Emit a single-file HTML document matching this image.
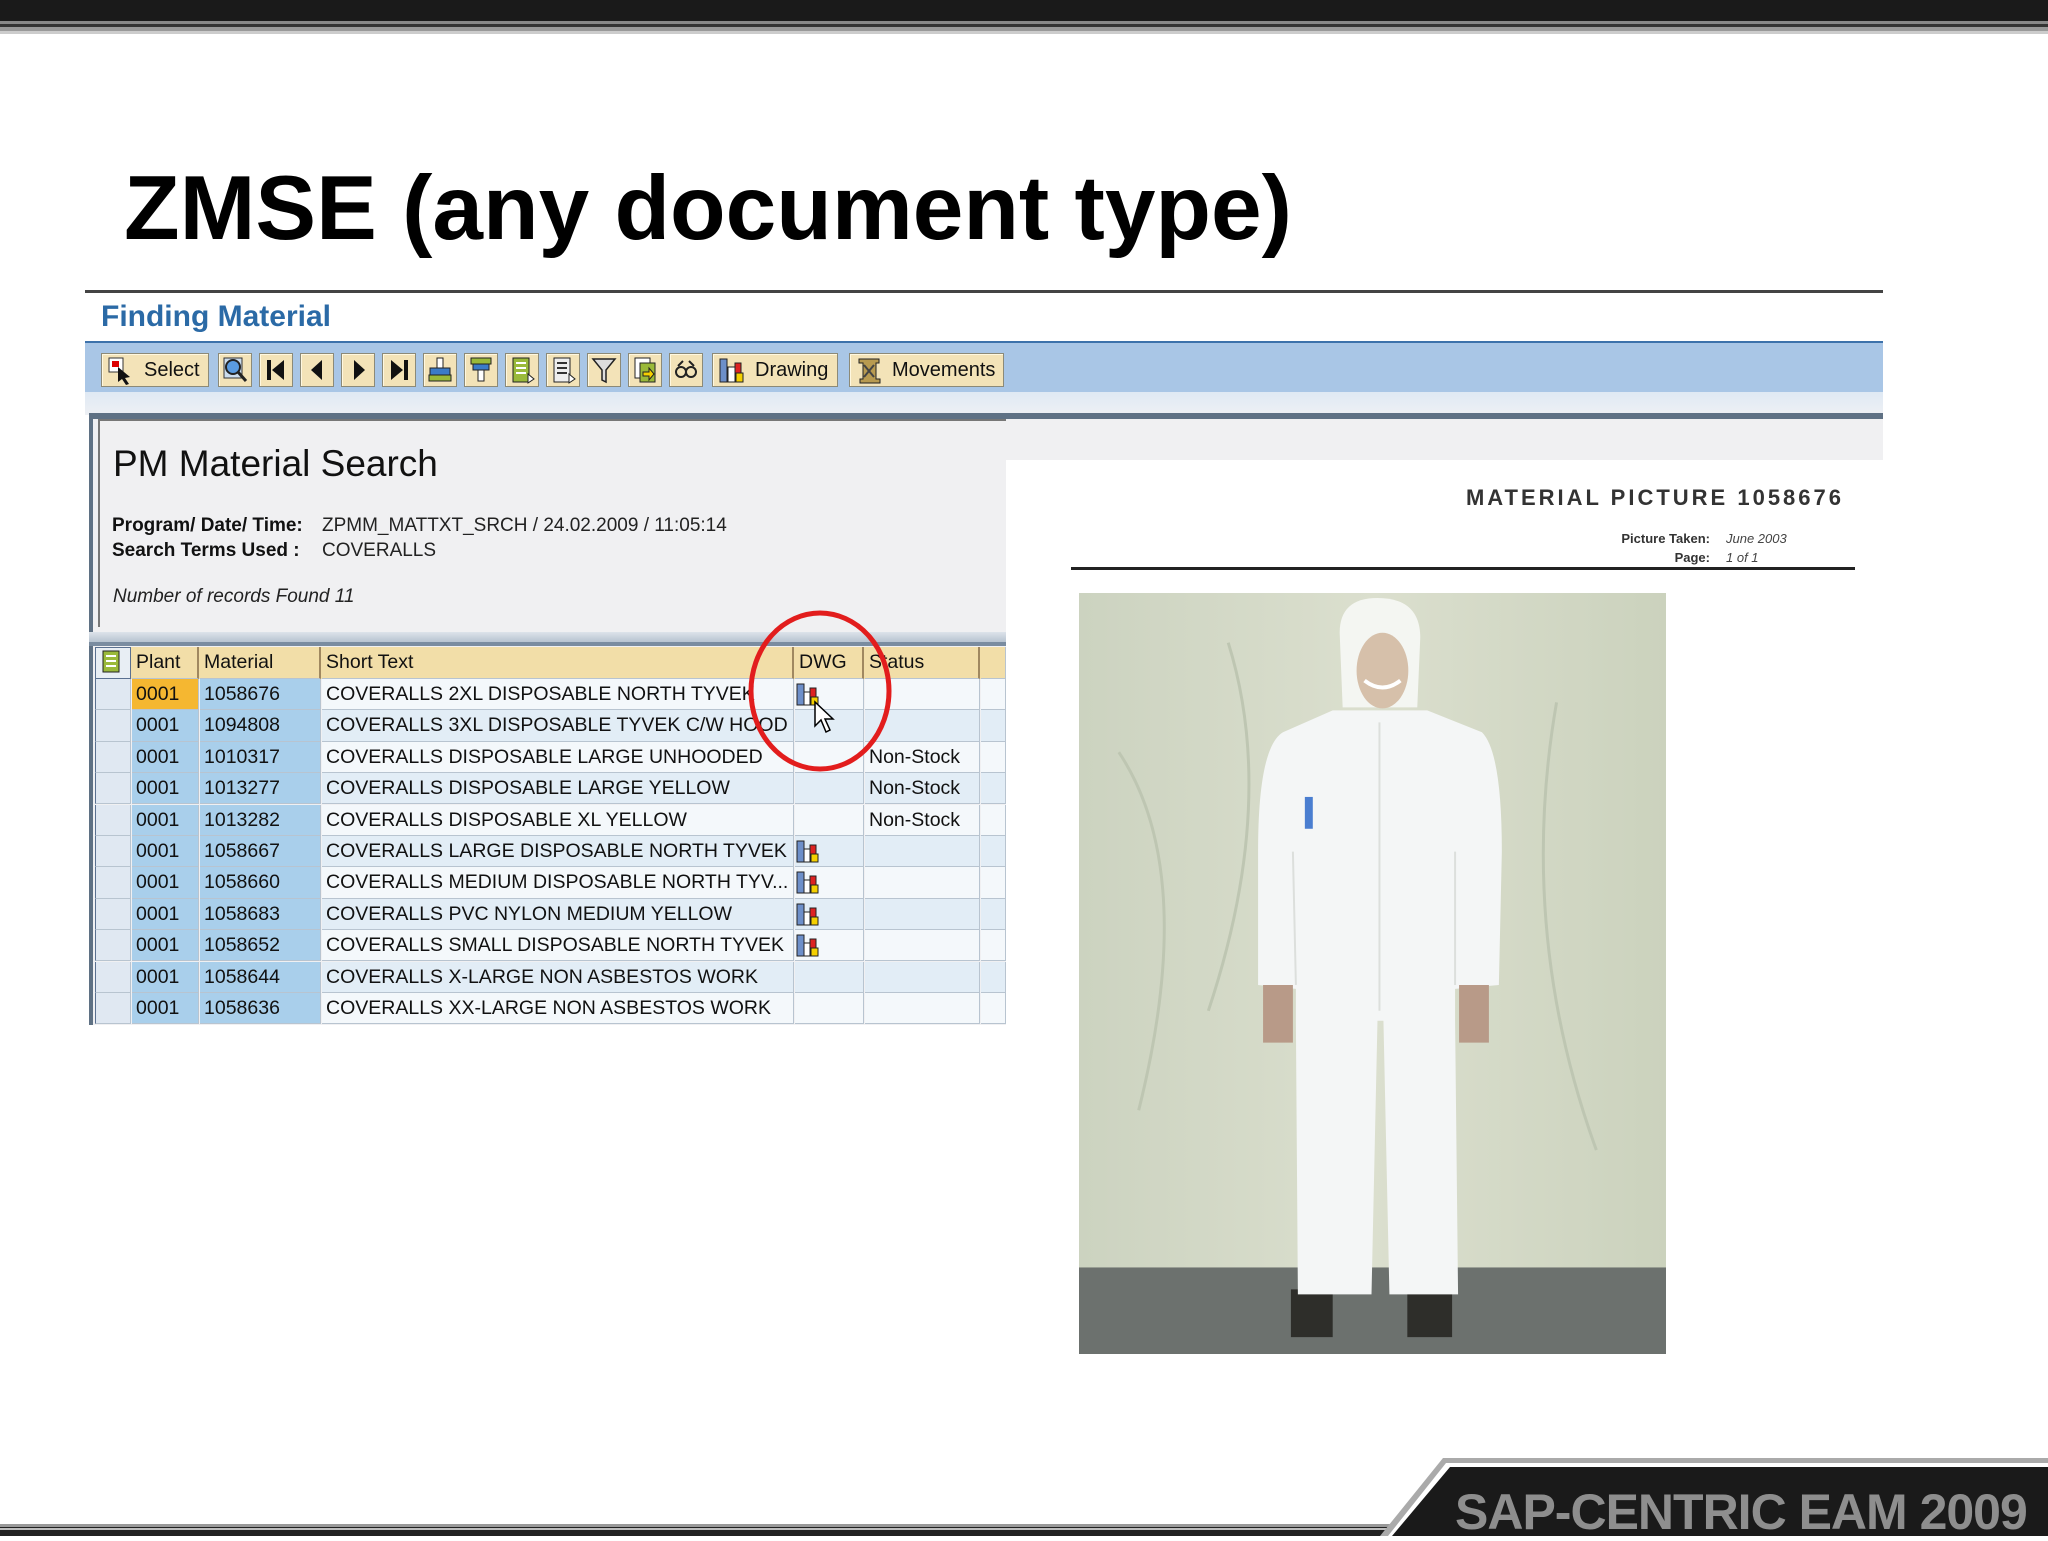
<!DOCTYPE html>
<html><head><meta charset="utf-8"><style>
*{margin:0;padding:0;box-sizing:border-box}
body{width:2048px;height:1536px;position:relative;background:#fff;font-family:"Liberation Sans",sans-serif;overflow:hidden}
.a{position:absolute}
.btn{position:absolute;top:353px;height:34px;background:#f3e3b8;border:1px solid #8c8a78;box-shadow:inset 1px 1px 0 #fff8e0;font-size:20px;color:#111;display:flex;align-items:center}
.ico{width:34px}
.row{position:absolute;left:95px;width:911px;height:31.3px;font-size:19.5px;color:#111}
.row div{position:absolute;top:0;height:100%;line-height:31px;border-right:1px solid #b8c4d0;border-bottom:1px solid #b8c4d0;padding-left:4px;white-space:nowrap;overflow:hidden}
.c0{left:0;width:36px;background:#e0e8f2;border-left:1px solid #5a7090}
.c1{left:37px;width:67px;background:#a9cfeb}
.c2{left:105px;width:121px;background:#a9cfeb}
.c3{left:227px;width:472px}
.c4{left:700px;width:69px}
.c5{left:770px;width:115px}
.c6{left:886px;width:25px}
</style></head><body>
<div class="a" style="left:0;top:0;width:2048px;height:21px;background:#1a1a1a"></div>
<div class="a" style="left:0;top:21px;width:2048px;height:3px;background:#888"></div>
<div class="a" style="left:0;top:24px;width:2048px;height:3px;background:#333"></div>
<div class="a" style="left:0;top:27px;width:2048px;height:4px;background:#999"></div>
<div class="a" style="left:0;top:31px;width:2048px;height:3px;background:#ccc"></div>

<div class="a" style="left:124px;top:157px;font-size:91px;font-weight:bold;color:#000">ZMSE (any document type)</div>
<div class="a" style="left:85px;top:290px;width:1798px;height:3px;background:#444"></div>
<div class="a" style="left:101px;top:300px;font-size:30px;font-weight:bold;color:#2b6aa6">Finding Material</div>
<div class="a" style="left:85px;top:341px;width:1798px;height:2px;background:#3d72ab"></div>
<div class="a" style="left:85px;top:343px;width:1798px;height:49px;background:#a9c6e6"></div>
<div class="a" style="left:85px;top:392px;width:1798px;height:23px;background:linear-gradient(#dfe9f4,#eef0f4)"></div>

<div class="btn" style="left:101px;width:108px"><svg width="30" height="30" style="margin:0 8px 0 4px"><rect x="3" y="3" width="14" height="14" fill="#fff" stroke="#333"/><rect x="6" y="6" width="7" height="6" fill="#d00"/><path d="M12 12 L24 22 L19 23 L23 29 L20 30 L16 24 L12 27Z" fill="#111"/></svg>Select</div>
<div class="btn ico" style="left:218px"><svg width="32" height="32"><rect x="5" y="4" width="18" height="20" fill="#cde" stroke="#333"/><circle cx="14" cy="13" r="7" fill="#5a9be0" stroke="#222" stroke-width="2"/><path d="M19 18 L27 27" stroke="#222" stroke-width="3"/></svg></div>
<div class="btn ico" style="left:259px"><svg width="32" height="32"><rect x="7" y="6" width="4" height="20" fill="#111"/><path d="M24 6 L12 16 L24 26Z" fill="#111"/></svg></div>
<div class="btn ico" style="left:300px"><svg width="32" height="32"><path d="M21 6 L10 16 L21 26Z" fill="#111"/></svg></div>
<div class="btn ico" style="left:341px"><svg width="32" height="32"><path d="M12 6 L23 16 L12 26Z" fill="#111"/></svg></div>
<div class="btn ico" style="left:382px"><svg width="32" height="32"><path d="M8 6 L20 16 L8 26Z" fill="#111"/><rect x="21" y="6" width="4" height="20" fill="#111"/></svg></div>
<div class="btn ico" style="left:423px"><svg width="32" height="32"><rect x="13" y="4" width="6" height="10" fill="#fff" stroke="#222"/><rect x="6" y="14" width="20" height="7" fill="#3b7bc8" stroke="#222"/><rect x="5" y="21" width="22" height="6" fill="#9ab93a" stroke="#222"/></svg></div>
<div class="btn ico" style="left:464px"><svg width="32" height="32"><rect x="6" y="4" width="20" height="6" fill="#9ab93a" stroke="#222"/><rect x="8" y="10" width="16" height="6" fill="#3b7bc8" stroke="#222"/><rect x="13" y="16" width="6" height="11" fill="#fff" stroke="#222"/></svg></div>
<div class="btn ico" style="left:505px"><svg width="32" height="32"><rect x="7" y="4" width="16" height="24" fill="#9ab93a" stroke="#222"/><path d="M10 9h10M10 14h10M10 19h10" stroke="#fff" stroke-width="2"/><path d="M22 20l6 5-6 4z" fill="#fff" stroke="#222"/></svg></div>
<div class="btn ico" style="left:546px"><svg width="32" height="32"><rect x="7" y="4" width="16" height="24" fill="#eee" stroke="#222"/><path d="M10 9h10M10 14h10M10 19h10" stroke="#333" stroke-width="2"/><path d="M22 20l6 5-6 4z" fill="#fff" stroke="#222"/></svg></div>
<div class="btn ico" style="left:587px"><svg width="32" height="32"><path d="M5 5 H27 L18 16 V28 L14 26 V16Z" fill="#ddd" stroke="#222" stroke-width="1.5"/></svg></div>
<div class="btn ico" style="left:628px"><svg width="32" height="32"><rect x="6" y="4" width="15" height="20" fill="#fff" stroke="#222"/><rect x="11" y="9" width="15" height="19" fill="#9ab93a" stroke="#222"/><path d="M14 18h6v-4l5 6-5 6v-4h-6z" fill="#f5d000" stroke="#222"/></svg></div>
<div class="btn ico" style="left:669px"><svg width="32" height="32"><circle cx="11" cy="18" r="5" fill="none" stroke="#222" stroke-width="2"/><circle cx="21" cy="18" r="5" fill="none" stroke="#222" stroke-width="2"/><path d="M8 12 L13 7 M24 12 L19 7" stroke="#222" stroke-width="2"/></svg></div>
<div class="btn" style="left:712px;width:126px"><svg width="30" height="30" style="margin:0 8px 0 4px"><rect x="3" y="4" width="7" height="23" fill="#6d8fc9" stroke="#222"/><rect x="11" y="12" width="7" height="15" fill="#fff" stroke="#222"/><rect x="18" y="8" width="6" height="10" fill="#d22" stroke="#222"/><rect x="19" y="18" width="7" height="9" fill="#f5d000" stroke="#222"/></svg>Drawing</div>
<div class="btn" style="left:849px;width:155px"><svg width="30" height="30" style="margin:0 8px 0 4px"><path d="M5 4 H25 V8 H22 V24 H26 V28 H6 V24 H9 V8 H5Z" fill="#b89a50" stroke="#222"/><path d="M10 10 L20 22 M20 10 L10 22" stroke="#444" stroke-width="2"/></svg>Movements</div>

<div class="a" style="left:89px;top:413px;width:1794px;height:6px;background:#5f7184"></div>
<div class="a" style="left:89px;top:419px;width:917px;height:606px;background:#f0f0f2;border-left:4px solid #5f7184"></div>
<div class="a" style="left:1006px;top:419px;width:877px;height:41px;background:#f0f0f2"></div>
<div class="a" style="left:98px;top:419px;width:908px;height:208px;border-left:2px solid #777;border-top:2px solid #777"></div>
<div class="a" style="left:113px;top:443px;font-size:37px;color:#111">PM Material Search</div>
<div class="a" style="left:112px;top:513px;font-size:19px;color:#111;line-height:25px"><b>Program/ Date/ Time:</b></div>
<div class="a" style="left:112px;top:538px;font-size:19px;color:#111;line-height:25px"><b>Search Terms Used :</b></div>
<div class="a" style="left:322px;top:513px;font-size:19px;color:#222;line-height:25px">ZPMM_MATTXT_SRCH / 24.02.2009 / 11:05:14</div>
<div class="a" style="left:322px;top:538px;font-size:19px;color:#222;line-height:25px">COVERALLS</div>
<div class="a" style="left:113px;top:586px;font-size:19px;font-style:italic;color:#222">Number of records Found 11</div>
<div class="a" style="left:89px;top:632px;width:917px;height:10px;background:linear-gradient(#dde3ea,#b7c3d0)"></div>
<div class="a" style="left:89px;top:642px;width:917px;height:4px;background:#7a8ca0"></div>

<div class="row" style="top:647px;height:32px;background:#f2dea8">
<div class="c0" style="background:#e8eef4;border:1px solid #5a7090"><svg width="26" height="28"><rect x="3" y="3" width="16" height="21" fill="#9ab93a" stroke="#222"/><path d="M6 8h10M6 13h10M6 18h10" stroke="#fff" stroke-width="2"/></svg></div>
<div class="c1" style="background:#f2dea8;border-right:2px solid #a08860">Plant</div>
<div class="c2" style="background:#f2dea8;border-right:2px solid #a08860">Material</div>
<div class="c3" style="background:#f2dea8;border-right:2px solid #a08860">Short Text</div>
<div class="c4" style="background:#f2dea8;border-right:2px solid #a08860">DWG</div>
<div class="c5" style="background:#f2dea8;border-right:2px solid #a08860">Status</div>
<div class="c6" style="background:#f2dea8"></div>
</div>

<div id="rows"></div>
<script>
const d=[["1058676","COVERALLS 2XL DISPOSABLE NORTH TYVEK",1,""],["1094808","COVERALLS 3XL DISPOSABLE TYVEK C/W HOOD",0,""],["1010317","COVERALLS DISPOSABLE LARGE UNHOODED",0,"Non-Stock"],["1013277","COVERALLS DISPOSABLE LARGE YELLOW",0,"Non-Stock"],["1013282","COVERALLS DISPOSABLE XL YELLOW",0,"Non-Stock"],["1058667","COVERALLS LARGE DISPOSABLE NORTH TYVEK",1,""],["1058660","COVERALLS MEDIUM DISPOSABLE NORTH TYV...",1,""],["1058683","COVERALLS PVC NYLON MEDIUM YELLOW",1,""],["1058652","COVERALLS SMALL DISPOSABLE NORTH TYVEK",1,""],["1058644","COVERALLS X-LARGE NON ASBESTOS WORK",0,""],["1058636","COVERALLS XX-LARGE NON ASBESTOS WORK",0,""]];
const ic='<svg width="28" height="26" style="margin-top:3px"><rect x="1" y="2" width="7" height="21" fill="#6d8fc9" stroke="#222"/><rect x="8" y="10" width="6" height="13" fill="#fff" stroke="#222"/><rect x="14" y="6" width="6" height="9" fill="#d22" stroke="#222"/><rect x="15" y="15" width="7" height="8" fill="#f5d000" stroke="#222"/></svg>';
let h='';d.forEach((r,i)=>{const bg=i%2?'#e2edf6':'#f4f8fb';h+=`<div class="row" style="top:${679+i*31.4}px"><div class="c0"></div><div class="c1" style="${i==0?'background:#f5b731':''}">0001</div><div class="c2">${r[0]}</div><div class="c3" style="background:${bg}">${r[1]}</div><div class="c4" style="background:${bg};padding-left:1px">${r[2]?ic:''}</div><div class="c5" style="background:${bg}">${r[3]}</div><div class="c6" style="background:${bg}"></div></div>`});
document.getElementById('rows').innerHTML=h;
</script>
<svg class="a" style="left:812px;top:700px" width="26" height="40"><path d="M3 2 L3 26 L9 20 L14 32 L18 30 L13 19 L21 19Z" fill="#fff" stroke="#000" stroke-width="1.5"/></svg>
<svg class="a" style="left:745px;top:606px" width="150" height="170"><ellipse cx="75" cy="85" rx="69" ry="78" fill="none" stroke="#e21d1d" stroke-width="5"/></svg>

<div class="a" style="left:1006px;top:460px;width:877px;height:990px;background:#fff"></div>
<div class="a" style="right:204px;top:485px;font-size:22px;font-weight:bold;color:#333;letter-spacing:3px">MATERIAL PICTURE 1058676</div>
<div class="a" style="left:1560px;top:529px;font-size:13px;font-weight:bold;color:#333;width:150px;text-align:right;line-height:19px">Picture Taken:<br>Page:</div>
<div class="a" style="left:1726px;top:529px;font-size:13px;font-style:italic;color:#444;line-height:19px">June 2003<br>1 of 1</div>
<div class="a" style="left:1071px;top:567px;width:784px;height:3px;background:#222"></div>

<svg class="a" style="left:1079px;top:593px" width="587" height="761" viewBox="0 0 590 765" preserveAspectRatio="none">
<defs><linearGradient id="bg" x1="0" x2="1"><stop offset="0" stop-color="#ccd3c0"/><stop offset=".5" stop-color="#dbdfce"/><stop offset="1" stop-color="#cbd2bd"/></linearGradient></defs>
<rect width="590" height="765" fill="url(#bg)"/>
<rect y="678" width="590" height="87" fill="#6c716e"/>
<path d="M40 160 Q120 280 60 520 M480 110 Q440 340 520 560 M150 50 Q200 210 130 420" stroke="#bec6b2" stroke-width="3" fill="none"/>
<path d="M213 748 h42 v-48 h-42z M330 748 h45 v-48 h-45z" fill="#2e2e2a"/>
<path d="M262 40 Q262 5 300 5 Q343 5 343 45 L340 115 L265 115Z" fill="#f4f6f2"/>
<ellipse cx="305" cy="78" rx="26" ry="38" fill="#d6c0aa"/>
<path d="M287 88 Q305 102 323 88" stroke="#fff" stroke-width="4" fill="none"/>
<path d="M255 118 L350 118 L405 140 Q425 160 425 260 L422 394 L378 398 L378 430 L381 705 L312 705 L306 430 L300 430 L294 705 L220 705 L218 430 L218 398 L180 394 L180 260 Q180 155 205 140Z" fill="#f4f6f6"/>
<path d="M215 260 L218 394 M378 260 L378 394 M302 130 L302 420" stroke="#dcdfdc" stroke-width="2"/>
<path d="M185 394 h30 v58 h-30z M382 394 h30 v58 h-30z" fill="#b89a88"/>
<rect x="227" y="205" width="8" height="32" fill="#4a7ed0"/>
</svg>

<div class="a" style="left:0;top:1524px;width:1400px;height:3px;background:#999"></div>
<div class="a" style="left:0;top:1527px;width:1400px;height:9px;background:#222"></div>
<div class="a" style="left:0;top:1528px;width:1400px;height:2px;background:#bbb"></div>
<svg class="a" style="left:1380px;top:1455px" width="668" height="81"><path d="M63 3 H668 V81 H0Z" fill="#aaa"/><path d="M66 8 H668 V81 H8Z" fill="#fff"/><path d="M70 12 H668 V81 H12Z" fill="#1a1a1a"/></svg>
<div class="a" style="left:1455px;top:1483px;font-size:50px;font-weight:bold;color:#8e8e8e;letter-spacing:-1px">SAP-CENTRIC EAM 2009</div>
</body></html>
